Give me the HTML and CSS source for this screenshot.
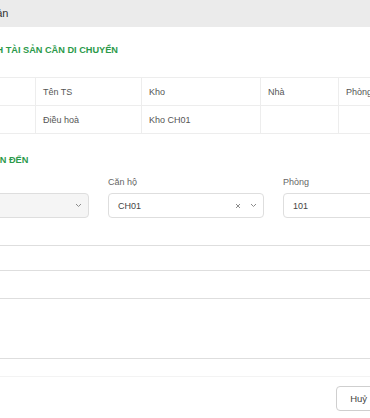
FILE: index.html
```html
<!DOCTYPE html>
<html lang="vi">

<head>
  <meta charset="UTF-8">
  <meta name="viewport" content="width=device-width, initial-scale=1.0">
  <title>Di chuyển tài sản</title>
  <link rel="stylesheet" href="styles.css">
</head>

<body>
  <div class="modal">
    <div class="modal-header">Di chuyển tài sản</div>

    <div class="modal-body">
      <h2 class="section-title first">DANH SÁCH TÀI SẢN CẦN DI CHUYỂN</h2>
      <table class="asset-table">
        <colgroup>
          <col style="width: 87px">
          <col style="width: 106px">
          <col style="width: 119px">
          <col style="width: 78px">
          <col>
        </colgroup>
        <thead>
          <tr>
            <th>Mã TS</th>
            <th>Tên TS</th>
            <th>Kho</th>
            <th>Nhà</th>
            <th>Phòng</th>
          </tr>
        </thead>
        <tbody>
          <tr>
            <td>TS001</td>
            <td>Điều hoà</td>
            <td>Kho CH01</td>
            <td></td>
            <td></td>
          </tr>
        </tbody>
      </table>

      <h2 class="section-title">NƠI CHUYỂN ĐẾN</h2>
      <div class="form-row">
        <div class="form-group">
          <label>Nhà</label>
          <div class="select disabled">
            <span class="value"></span>
            <svg class="chevron" width="7" height="5" viewBox="0 0 7 5"><path d="M1 1l2.5 2.5L6 1" fill="none" stroke="#8c8c8c" stroke-width="1"/></svg>
          </div>
        </div>
        <div class="form-group">
          <label>Căn hộ</label>
          <div class="select">
            <span class="value">CH01</span>
            <svg class="clear" width="6" height="6" viewBox="0 0 6 6"><path d="M1 1l4 4M5 1L1 5" fill="none" stroke="#8c8c8c" stroke-width="1"/></svg>
            <svg class="chevron" width="7" height="5" viewBox="0 0 7 5"><path d="M1 1l2.5 2.5L6 1" fill="none" stroke="#8c8c8c" stroke-width="1"/></svg>
          </div>
        </div>
        <div class="form-group">
          <label>Phòng</label>
          <div class="select">
            <span class="value">101</span>
          </div>
        </div>
      </div>

      <div class="form-group wide">
        <label>Người nhận</label>
        <div class="input"></div>
      </div>

      <div class="form-group wide">
        <label>Lý do</label>
        <div class="textarea"></div>
      </div>
    </div>

    <div class="modal-footer">
      <button type="button" class="btn">Huỷ</button>
      <button type="button" class="btn primary">Lưu</button>
    </div>
  </div>
</body>

</html>
```

FILE: styles.css
```css
body {
  margin: 0;
  padding: 0;
  overflow: hidden;
  background-color: #fff;
}

.modal {
  width: 542px;
  margin-left: -92px;
  font-family: "Liberation Sans", Arial, sans-serif;
  color: #4a4a4a;
}

.modal-header {
  height: 27px;
  line-height: 27px;
  padding-left: 16px;
  background-color: #ebebeb;
  font-size: 11px;
  color: #333;
}

.modal-body {
  padding: 17px 16px 17px 40px;
}

.section-title {
  margin: 20px 0 0;
  font-size: 9.2px;
  line-height: 12px;
  font-weight: bold;
  color: #2b9a4a;
}

.section-title.first {
  margin-top: 0;
}

/* table of assets to move */
.asset-table {
  width: 100%;
  margin-top: 21px;
  border-collapse: collapse;
  table-layout: fixed;
  font-size: 9px;
}

.asset-table th,
.asset-table td {
  height: 27px;
  padding: 0 7px;
  border: 1px solid #ededed;
  text-align: left;
  font-weight: normal;
  color: #555;
}

/* destination form */
.form-row {
  display: grid;
  grid-template-columns: 141px 156px 1fr;
  gap: 19px;
  margin-top: 10px;
}

.form-group label {
  display: block;
  height: 12px;
  line-height: 12px;
  margin-bottom: 5px;
  font-size: 9px;
  color: #666;
}

.form-group.wide {
  margin-top: 10px;
}

.select,
.input,
.textarea {
  box-sizing: border-box;
  height: 25px;
  border: 1px solid #dedede;
  border-radius: 4px;
  background-color: #fff;
}

.input {
  height: 26px;
}

.select {
  display: flex;
  align-items: center;
  gap: 9px;
  padding: 0 6px 0 9px;
  font-size: 9px;
  color: #444;
}

.select.disabled {
  background-color: #f5f5f5;
}

.select .value {
  flex: 1;
}

.textarea {
  height: 61px;
}

.modal-footer {
  display: flex;
  justify-content: flex-end;
  gap: 8px;
  padding: 9px 16px;
  border-top: 1px solid #f3f3f3;
}

.btn {
  height: 25px;
  padding: 0 13px;
  border: 1px solid #cfcfcf;
  border-radius: 4px;
  background-color: #fff;
  font-family: inherit;
  font-size: 9.5px;
  color: #444;
  cursor: pointer;
}

.btn.primary {
  border-color: #2b9a4a;
  background-color: #2b9a4a;
  color: #fff;
}
```
